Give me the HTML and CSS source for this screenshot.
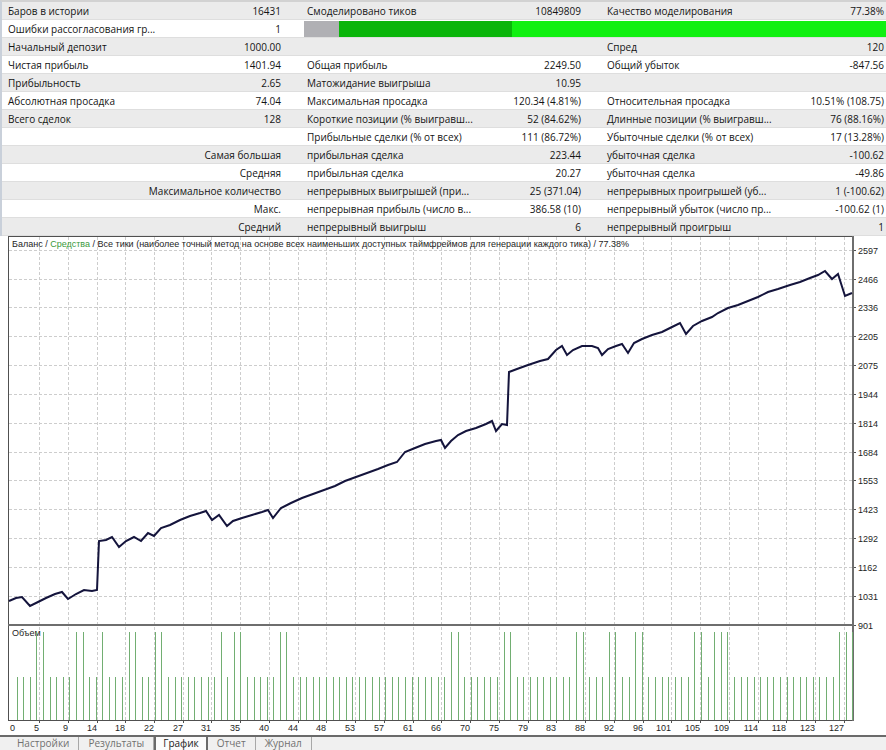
FILE: index.html
```html
<!DOCTYPE html>
<html lang="ru">
<head>
<meta charset="utf-8">
<title>Тестер стратегий — График</title>
<link rel="stylesheet" href="styles.css">
</head>
<body>
<div class="tester">
  <div class="stats">
    <div class="row alt"><span class="lab first">Баров в истории</span><span class="val">16431</span><span class="lab">Смоделировано тиков</span><span class="val">10849809</span><span class="lab">Качество моделирования</span><span class="val last">77.38%</span></div>
    <div class="row"><span class="lab first">Ошибки рассогласования гр...</span><span class="val">1</span><span class="bar"><i class="seg gray"></i><i class="seg dark"></i><i class="seg lite"></i></span></div>
    <div class="row alt"><span class="lab first">Начальный депозит</span><span class="val">1000.00</span><span class="lab"></span><span class="val"></span><span class="lab">Спред</span><span class="val last">120</span></div>
    <div class="row"><span class="lab first">Чистая прибыль</span><span class="val">1401.94</span><span class="lab">Общая прибыль</span><span class="val">2249.50</span><span class="lab">Общий убыток</span><span class="val last">-847.56</span></div>
    <div class="row alt"><span class="lab first">Прибыльность</span><span class="val">2.65</span><span class="lab">Матожидание выигрыша</span><span class="val">10.95</span><span class="lab"></span><span class="val last"></span></div>
    <div class="row"><span class="lab first">Абсолютная просадка</span><span class="val">74.04</span><span class="lab">Максимальная просадка</span><span class="val">120.34 (4.81%)</span><span class="lab">Относительная просадка</span><span class="val last">10.51% (108.75)</span></div>
    <div class="row alt"><span class="lab first">Всего сделок</span><span class="val">128</span><span class="lab">Короткие позиции (% выигравш...</span><span class="val">52 (84.62%)</span><span class="lab">Длинные позиции (% выигравш...</span><span class="val last">76 (88.16%)</span></div>
    <div class="row"><span class="grp"></span><span class="lab">Прибыльные сделки (% от всех)</span><span class="val">111 (86.72%)</span><span class="lab">Убыточные сделки (% от всех)</span><span class="val last">17 (13.28%)</span></div>
    <div class="row alt"><span class="grp">Самая большая</span><span class="lab">прибыльная сделка</span><span class="val">223.44</span><span class="lab">убыточная сделка</span><span class="val last">-100.62</span></div>
    <div class="row"><span class="grp">Средняя</span><span class="lab">прибыльная сделка</span><span class="val">20.27</span><span class="lab">убыточная сделка</span><span class="val last">-49.86</span></div>
    <div class="row alt"><span class="grp">Максимальное количество</span><span class="lab">непрерывных выигрышей (при...</span><span class="val">25 (371.04)</span><span class="lab">непрерывных проигрышей (уб...</span><span class="val last">1 (-100.62)</span></div>
    <div class="row"><span class="grp">Макс.</span><span class="lab">непрерывная прибыль (число в...</span><span class="val">386.58 (10)</span><span class="lab">непрерывный убыток (число пр...</span><span class="val last">-100.62 (1)</span></div>
    <div class="row alt"><span class="grp">Средний</span><span class="lab">непрерывный выигрыш</span><span class="val">6</span><span class="lab">непрерывный проигрыш</span><span class="val last">1</span></div>
  </div>

  <div class="chart">
    <svg class="plot" width="886" height="499" viewBox="0 236 886 499" xmlns="http://www.w3.org/2000/svg">
      <rect x="0" y="236" width="886" height="499" fill="#ffffff"/>
      <path class="grid" d="M39.5 237V624M68.5 237V624M97.5 237V624M125.5 237V624M154.5 237V624M183.5 237V624M211.5 237V624M240.5 237V624M269.5 237V624M298.5 237V624M326.5 237V624M355.5 237V624M384.5 237V624M413.5 237V624M441.5 237V624M470.5 237V624M499.5 237V624M528.5 237V624M556.5 237V624M585.5 237V624M614.5 237V624M643.5 237V624M671.5 237V624M700.5 237V624M729.5 237V624M758.5 237V624M786.5 237V624M815.5 237V624M844.5 237V624 M39.5 627V720M68.5 627V720M97.5 627V720M125.5 627V720M154.5 627V720M183.5 627V720M211.5 627V720M240.5 627V720M269.5 627V720M298.5 627V720M326.5 627V720M355.5 627V720M384.5 627V720M413.5 627V720M441.5 627V720M470.5 627V720M499.5 627V720M528.5 627V720M556.5 627V720M585.5 627V720M614.5 627V720M643.5 627V720M671.5 627V720M700.5 627V720M729.5 627V720M758.5 627V720M786.5 627V720M815.5 627V720M844.5 627V720 M9 250.5H852M9 279.5H852M9 307.5H852M9 336.5H852M9 365.5H852M9 394.5H852M9 423.5H852M9 452.5H852M9 480.5H852M9 509.5H852M9 538.5H852M9 567.5H852M9 596.5H852"/>
      <path class="frame" d="M8 236.5H853M8.5 236V721M8 720.5H854"/>
      <path class="frame thick" d="M853 236V721M8 625H854"/>
      <text class="title" x="12" y="246.5">Баланс / <tspan class="eq">Средства</tspan> / Все тики (наиболее точный метод на основе всех наименьших доступных таймфреймов для генерации каждого тика) / 77.38%</text>
      <polyline class="balance" points="9,601 16,598 22,597 30,606 38,602 46,598 55,594 62,592 68,599 76,594 84,590 92,591 97,590 99,541 106,540 112,537 119,547 126,541 134,537 141,541 148,533 154,536 161,528 170,525 180,520 190,516 200,513 206,511 212,520 219,515 227,526 233,521 242,518 252,515 262,512 268,510 273,518 281,508 291,503 302,498 313,494 324,490 335,486 345,481 356,477 367,473 378,469 388,465 397,462 405,452 415,448 425,444 436,441 441,440 445,448 451,441 458,435 466,431 476,428 486,424 492,421 496,431 502,424 507,425 509,372 517,369 528,365 540,361 548,359 556,350 562,346 567,355 573,350 582,346 592,346 598,348 602,355 608,349 616,346 622,344 628,353 634,343 642,339 652,335 662,332 672,327 680,323 686,334 693,326 702,321 712,317 718,313 728,308 738,305 748,301 758,297 768,292 778,289 790,285 800,282 810,278 818,275 825,271 832,279 838,274 845,296 852,293"/>
      <text class="small" x="12" y="636">Объем</text>
      <path class="vol" d="M17.5 677V720M23.5 677V720M30.5 677V720M36.5 632V720M43.5 632V720M50.5 677V720M56.5 677V720M63.5 677V720M69.5 677V720M76.5 632V720M83.5 632V720M89.5 677V720M96.5 677V720M102.5 632V720M109.5 677V720M115.5 677V720M122.5 677V720M129.5 632V720M135.5 632V720M142.5 677V720M148.5 677V720M155.5 632V720M161.5 632V720M168.5 677V720M175.5 677V720M181.5 677V720M188.5 677V720M194.5 677V720M201.5 677V720M208.5 677V720M214.5 677V720M221.5 632V720M227.5 677V720M234.5 632V720M240.5 632V720M247.5 677V720M254.5 677V720M260.5 677V720M267.5 677V720M273.5 677V720M280.5 632V720M286.5 632V720M293.5 677V720M300.5 677V720M306.5 677V720M313.5 677V720M319.5 677V720M326.5 677V720M333.5 677V720M339.5 677V720M346.5 677V720M352.5 677V720M359.5 677V720M365.5 677V720M372.5 677V720M379.5 677V720M385.5 677V720M392.5 677V720M398.5 677V720M405.5 677V720M412.5 677V720M418.5 677V720M425.5 677V720M431.5 677V720M438.5 677V720M444.5 677V720M451.5 632V720M458.5 632V720M464.5 677V720M471.5 677V720M477.5 677V720M484.5 677V720M490.5 677V720M497.5 677V720M504.5 632V720M510.5 632V720M517.5 677V720M523.5 677V720M530.5 677V720M537.5 677V720M543.5 677V720M550.5 677V720M556.5 677V720M563.5 677V720M569.5 677V720M576.5 632V720M583.5 632V720M589.5 677V720M596.5 677V720M602.5 677V720M609.5 632V720M615.5 632V720M622.5 677V720M629.5 677V720M635.5 632V720M642.5 632V720M648.5 677V720M655.5 677V720M662.5 677V720M668.5 677V720M675.5 677V720M681.5 677V720M688.5 677V720M694.5 632V720M701.5 632V720M708.5 677V720M714.5 632V720M721.5 632V720M727.5 632V720M734.5 677V720M741.5 677V720M747.5 677V720M754.5 677V720M760.5 677V720M767.5 677V720M773.5 677V720M780.5 677V720M787.5 677V720M793.5 677V720M800.5 677V720M806.5 677V720M813.5 677V720M819.5 677V720M826.5 677V720M833.5 677V720M839.5 632V720M846.5 632V720M852.5 632V720"/>
      <path class="tick" d="M854 250.5h2M854 279.5h2M854 307.5h2M854 336.5h2M854 365.5h2M854 394.5h2M854 423.5h2M854 452.5h2M854 480.5h2M854 509.5h2M854 538.5h2M854 567.5h2M854 596.5h2M854 625.5h2"/>
      <g class="small">
        <text x="858" y="254">2597</text>
        <text x="858" y="283">2466</text>
        <text x="858" y="311">2336</text>
        <text x="858" y="340">2205</text>
        <text x="858" y="369">2075</text>
        <text x="858" y="398">1944</text>
        <text x="858" y="427">1814</text>
        <text x="858" y="456">1684</text>
        <text x="858" y="484">1553</text>
        <text x="858" y="513">1423</text>
        <text x="858" y="542">1292</text>
        <text x="858" y="571">1162</text>
        <text x="858" y="600">1031</text>
        <text x="858" y="629">901</text>
      </g>
      <path class="tick" d="M39.5 721v2M68.5 721v2M97.5 721v2M125.5 721v2M154.5 721v2M183.5 721v2M211.5 721v2M240.5 721v2M269.5 721v2M298.5 721v2M326.5 721v2M355.5 721v2M384.5 721v2M413.5 721v2M441.5 721v2M470.5 721v2M499.5 721v2M528.5 721v2M556.5 721v2M585.5 721v2M614.5 721v2M643.5 721v2M671.5 721v2M700.5 721v2M729.5 721v2M758.5 721v2M786.5 721v2M815.5 721v2M844.5 721v2"/>
      <g class="small xl">
        <text x="15" y="731">0</text>
        <text x="39" y="731">5</text>
        <text x="68" y="731">9</text>
        <text x="97" y="731">14</text>
        <text x="125" y="731">18</text>
        <text x="154" y="731">22</text>
        <text x="183" y="731">27</text>
        <text x="211" y="731">31</text>
        <text x="240" y="731">35</text>
        <text x="269" y="731">40</text>
        <text x="298" y="731">44</text>
        <text x="326" y="731">48</text>
        <text x="355" y="731">53</text>
        <text x="384" y="731">57</text>
        <text x="413" y="731">61</text>
        <text x="441" y="731">66</text>
        <text x="470" y="731">70</text>
        <text x="499" y="731">75</text>
        <text x="528" y="731">79</text>
        <text x="556" y="731">83</text>
        <text x="585" y="731">88</text>
        <text x="614" y="731">92</text>
        <text x="643" y="731">96</text>
        <text x="671" y="731">101</text>
        <text x="700" y="731">105</text>
        <text x="729" y="731">109</text>
        <text x="758" y="731">114</text>
        <text x="786" y="731">118</text>
        <text x="815" y="731">123</text>
        <text x="844" y="731">127</text>
      </g>
    </svg>
  </div>

  <div class="tabs">
    <span class="tab">Настройки</span>
    <span class="tab">Результаты</span>
    <span class="tab active">График</span>
    <span class="tab">Отчет</span>
    <span class="tab">Журнал</span>
  </div>
</div>
</body>
</html>
```

FILE: styles.css
```css
* {
  box-sizing: border-box;
}

html,
body {
  margin: 0;
  padding: 0;
}

body {
  width: 886px;
  height: 750px;
  overflow: hidden;
  background: #ffffff;
  font-family: "Open Sans", "Noto Sans", sans-serif;
  font-size: 10px;
  color: #141414;
}

.tester {
  display: flex;
  flex-direction: column;
  width: 886px;
}

/* statistics table */
.stats {
  border-top: 2px solid #d2d2d2;
  border-left: 2px solid #c9d0da;
}

.row {
  display: grid;
  grid-template-columns: 198px 100px 200px 100px 200px 86px;
  height: 18px;
  align-items: center;
  border-bottom: 1px solid #dedede;
  white-space: nowrap;
}

.row.alt {
  background: #ebebeb;
}

.row > span {
  overflow: hidden;
  line-height: 16px;
  padding-top: 1px;
}

.lab {
  padding-left: 7px;
}

.lab.first {
  padding-left: 6px;
}

.val {
  text-align: right;
  padding-right: 19px;
}

.val.last {
  padding-right: 2px;
}

.grp {
  grid-column: span 2;
  text-align: right;
  padding-right: 19px;
}

.row > .bar {
  grid-column: 3 / span 4;
  display: flex;
  height: 17px;
  padding: 1px 0 0 4px;
}

.seg {
  display: block;
  height: 16px;
}

.seg.gray {
  width: 35px;
  background: #b0b0b4;
}

.seg.dark {
  width: 173px;
  background: #0bb50b;
}

.seg.lite {
  flex: 1;
  background: #12f012;
}

/* chart */
.chart {
  height: 499px;
}

.plot {
  display: block;
  font-family: "Liberation Sans", Arial, sans-serif;
}

.grid {
  fill: none;
  stroke: #cdcdcd;
  stroke-width: 1;
  stroke-dasharray: 3 2;
}

.frame {
  fill: none;
  stroke: #505050;
  stroke-width: 1;
}

.frame.thick {
  stroke: #6e6e6e;
  stroke-width: 2;
}

.title {
  font-size: 9px;
  fill: #1e1e1e;
}

.eq {
  fill: #3a9a3a;
}

.balance {
  fill: none;
  stroke: #14143c;
  stroke-width: 2;
}

.vol {
  fill: none;
  stroke: #72ae72;
  stroke-width: 1;
}

.small {
  font-size: 9px;
  fill: #1e1e1e;
}

.xl text {
  text-anchor: end;
}

.tick {
  fill: none;
  stroke: #505050;
  stroke-width: 1;
}

/* bottom tabs */
.tabs {
  display: flex;
  height: 15px;
  padding-left: 8px;
  border-top: 2px solid #6a6a6a;
  background: #f0f0f0;
}

.tab {
  padding: 0 9px;
  font-size: 10px;
  line-height: 13px;
  height: 13px;
  color: #707070;
  border-right: 1px solid #a8a8a8;
}

.tab.active {
  padding: 0 7px;
  color: #1a1a1a;
  background: #fbfbfb;
  border-left: 2px solid #6a6a6a;
  border-right: 2px solid #6a6a6a;
}
```
